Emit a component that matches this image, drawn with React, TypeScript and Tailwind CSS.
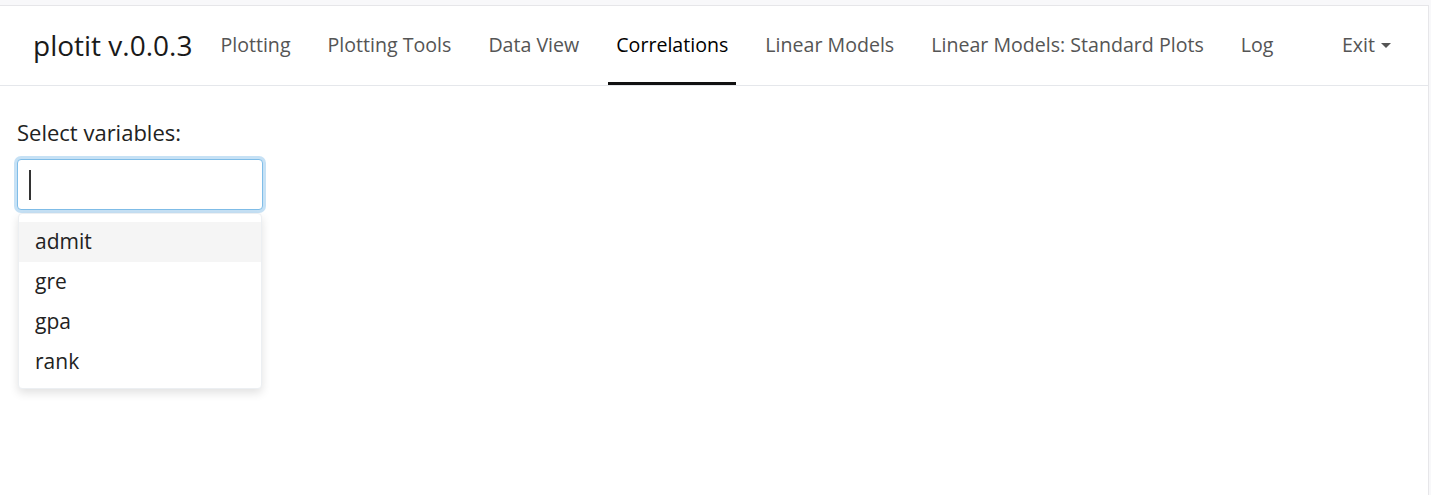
import React from "react";

const navItems = [
  "Plotting",
  "Plotting Tools",
  "Data View",
  "Correlations",
  "Linear Models",
  "Linear Models: Standard Plots",
  "Log",
];

export default function App() {
  return (
    <div
      className="h-[495px] w-[1431px] bg-[#f8f8fa] overflow-hidden"
      style={{ fontFamily: '"Open Sans", "Noto Sans", sans-serif' }}
    >
      <div className="mt-[5px] h-[490px] w-[1429px] bg-white border-t border-r border-[#e6e6e9]">
        <nav className="h-[80px] border-b border-[#e5e7eb] flex items-center pl-[33px] pr-[29px]">
          <div className="text-[28px] text-[#1a1a1a] leading-none mr-[20px] -mt-[1px]">plotit v.0.0.3</div>
          <div className="flex items-stretch h-full gap-[21px]">
            {navItems.map((n) => (
              <div
                key={n}
                className={
                  "relative flex items-center px-[8px] text-[19.6px] leading-none -mt-[1px] " +
                  (n === "Correlations" ? "text-[#000]" : "text-[#555]")
                }
              >
                {n}
                {n === "Correlations" && (
                  <div className="absolute left-0 right-0 bottom-0 h-[3px] bg-[#111]" />
                )}
              </div>
            ))}
          </div>
          <div className="ml-auto flex items-center text-[19.6px] text-[#555] leading-none -mt-[1px] px-[8px]">
            Exit
            <svg width="10" height="6" viewBox="0 0 10 6" className="ml-[6px] mt-[1px]">
              <path d="M0 0 L10 0 L5 5 Z" fill="#555" />
            </svg>
          </div>
        </nav>
        <div className="pl-[17px] pt-[34px]">
          <div className="text-[22px] text-[#222] leading-[24px]">Select variables:</div>
          <div className="relative mt-[15px] w-[246px]">
            <div className="h-[51px] rounded-[4px] border border-[#80bde8] bg-white shadow-[0_0_0_3px_rgba(128,189,232,0.45)] flex items-center pl-[11px]">
              <div className="w-[1.5px] h-[30px] bg-[#333]" />
            </div>
            <div className="absolute left-[1px] top-[54px] w-[244px] bg-white rounded-[4px] border border-[#eceff2] shadow-[0_4px_10px_rgba(0,0,0,0.12)] pt-[8px] pb-[6px]">
              {["admit", "gre", "gpa", "rank"].map((v, i) => (
                <div
                  key={v}
                  className={
                    "h-[40px] flex items-center pl-[16px] text-[21px] text-[#222] " +
                    (i === 0 ? "bg-[#f5f5f5]" : "")
                  }
                >
                  {v}
                </div>
              ))}
            </div>
          </div>
        </div>
      </div>
    </div>
  );
}
